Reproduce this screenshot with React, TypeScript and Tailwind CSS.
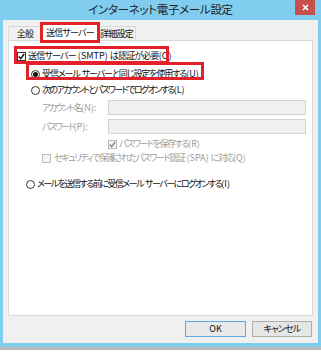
import React from "react";

const jp = "font-['Meiryo_UI','Noto_Sans_CJK_JP',sans-serif] [font-feature-settings:'palt']";

// tighten only the Japanese runs, leave latin / brackets alone
function T({ s, c }: { s: string; c: string }) {
  const parts = s.split(/([\u3000-\u30ff\u4e00-\u9fff]+)/);
  return (
    <span className="whitespace-nowrap">
      {parts.map((p, i) =>
        /[\u3000-\u30ff\u4e00-\u9fff]/.test(p) ? (
          <span key={i} className={c}>
            {p}
          </span>
        ) : (
          <span key={i}>{p}</span>
        )
      )}
    </span>
  );
}

function Check({ checked, disabled }: { checked?: boolean; disabled?: boolean }) {
  return (
    <span
      className={`inline-flex h-[9px] w-[9px] shrink-0 items-center justify-center border ${
        disabled ? "border-[#bcbcbc] bg-[#f4f4f4]" : "border-[#333] bg-white"
      }`}
    >
      {checked && (
        <svg width="7" height="7" viewBox="0 0 7 7">
          <path d="M0.8 3.5 L2.7 5.6 L6.2 1" fill="none" stroke={disabled ? "#8a8a8a" : "#111"} strokeWidth="1.5" />
        </svg>
      )}
    </span>
  );
}

function Radio({ on }: { on?: boolean }) {
  return (
    <span className="inline-flex h-[9px] w-[9px] shrink-0 items-center justify-center rounded-full border border-[#333] bg-white">
      {on && <span className="h-[5px] w-[5px] rounded-full bg-[#111]" />}
    </span>
  );
}

export default function App() {
  return (
    <div className={`h-[353px] w-[321px] bg-white ${jp}`}>
      <div className="flex h-[350px] flex-col border-b-[3px] border-[#b9b9b9]">
        <div className="flex h-[347px] flex-col bg-[#80cdf0]">
          {/* title bar */}
          <div className="relative flex h-[20px] items-center justify-center">
            <span className="text-[11.5px] tracking-[-0.3px] text-[#222]">インターネット電子メール設定</span>
            <div className="absolute right-[6px] top-0 flex h-[15px] w-[20px] items-center justify-center bg-[#c7504d]">
              <svg width="7" height="7" viewBox="0 0 7 7">
                <path d="M1 1 L6 6 M6 1 L1 6" stroke="#fff" strokeWidth="1.6" />
              </svg>
            </div>
          </div>

          {/* client */}
          <div className="mx-[3px] mb-[4px] flex flex-1 flex-col bg-[#f0f0f0] px-[5px]">
            <div className="relative flex h-[20px] items-end text-[9px] tracking-[-0.8px] text-[#111]">
              <div className="flex h-[14px] w-[34px] items-center justify-center border border-b-0 border-[#d9d9d9] bg-[#f0f0f0]">全般</div>
              <div className="relative z-10 -mb-px flex h-[17px] w-[56px] items-center justify-center border border-b-0 border-[#d9d9d9] bg-white">
                送信サーバー
              </div>
              <div className="flex h-[14px] w-[38px] items-center justify-center border border-b-0 border-l-0 border-[#d9d9d9] bg-[#f0f0f0]">詳細設定</div>
              <div className="pointer-events-none absolute left-[32px] top-[2px] z-20 h-[21px] w-[60px] border-[3px] border-[#e3212b]" />
            </div>

            <div className="relative h-[276px] border border-[#d9d9d9] bg-white text-[9px] text-[#111]">
              <div className="flex flex-col pl-[8px] pt-[9px]">
                <div className="flex h-[12px] items-center gap-[2px]">
                  <Check checked />
                  <T s="送信サーバー (SMTP) は認証が必要(O)" c="tracking-[-0.8px]" />
                </div>
                <div className="mt-[6px] flex h-[12px] items-center gap-[2px] pl-[14px]">
                  <Radio on />
                  <T s="受信メール サーバーと同じ設定を使用する(U)" c="tracking-[-1.1px]" />
                </div>
                <div className="mt-[4px] flex h-[12px] items-center gap-[2px] pl-[14px]">
                  <Radio />
                  <T s="次のアカウントとパスワードでログオンする(L)" c="tracking-[-1.6px]" />
                </div>

                <div className="mt-[4px] flex h-[15px] items-center pl-[25px] text-[#9d9d9d]">
                  <span className="w-[66px]">
                    <T s="アカウント名(N):" c="tracking-[-1.6px]" />
                  </span>
                  <div className="h-[15px] w-[198px] border border-[#d2d2d2] bg-[#f0f0f0]" />
                </div>
                <div className="mt-[4px] flex h-[15px] items-center pl-[25px] text-[#9d9d9d]">
                  <span className="w-[66px]">
                    <T s="パスワード(P):" c="tracking-[-1.8px]" />
                  </span>
                  <div className="h-[15px] w-[198px] border border-[#d2d2d2] bg-[#f0f0f0]" />
                </div>
                <div className="mt-[4px] flex h-[12px] items-center gap-[2px] pl-[91px] text-[#9d9d9d]">
                  <Check checked disabled />
                  <T s="パスワードを保存する(R)" c="tracking-[-1.4px]" />
                </div>
                <div className="mt-[2px] flex h-[12px] items-center gap-[3px] pl-[25px] text-[#9d9d9d]">
                  <Check disabled />
                  <T s="セキュリティで保護されたパスワード認証 (SPA) に対応(Q)" c="tracking-[-1.4px]" />
                </div>
                <div className="mt-[14px] flex h-[12px] items-center gap-[2px] pl-[9px]">
                  <Radio />
                  <T s="メールを送信する前に受信メール サーバーにログオンする(I)" c="tracking-[-1.5px]" />
                </div>
              </div>

              <div className="pointer-events-none absolute left-[5px] top-[5px] h-[18px] w-[155px] border-[3px] border-[#e3212b]" />
              <div className="pointer-events-none absolute left-[17px] top-[21px] h-[18px] w-[178px] border-[3px] border-[#e3212b]" />
            </div>

            <div className="mt-[5px] flex justify-end gap-[6px] pr-[1px] text-[9px] text-[#111]">
              <button className="flex h-[16px] w-[61px] items-center justify-center border border-[#5fa8e3] bg-[#e9e9e9]">OK</button>
              <button className="flex h-[16px] w-[60px] items-center justify-center border border-[#adadad] bg-[#e6e6e6] tracking-[-0.8px]">キャンセル</button>
            </div>
          </div>
        </div>
      </div>
    </div>
  );
}
